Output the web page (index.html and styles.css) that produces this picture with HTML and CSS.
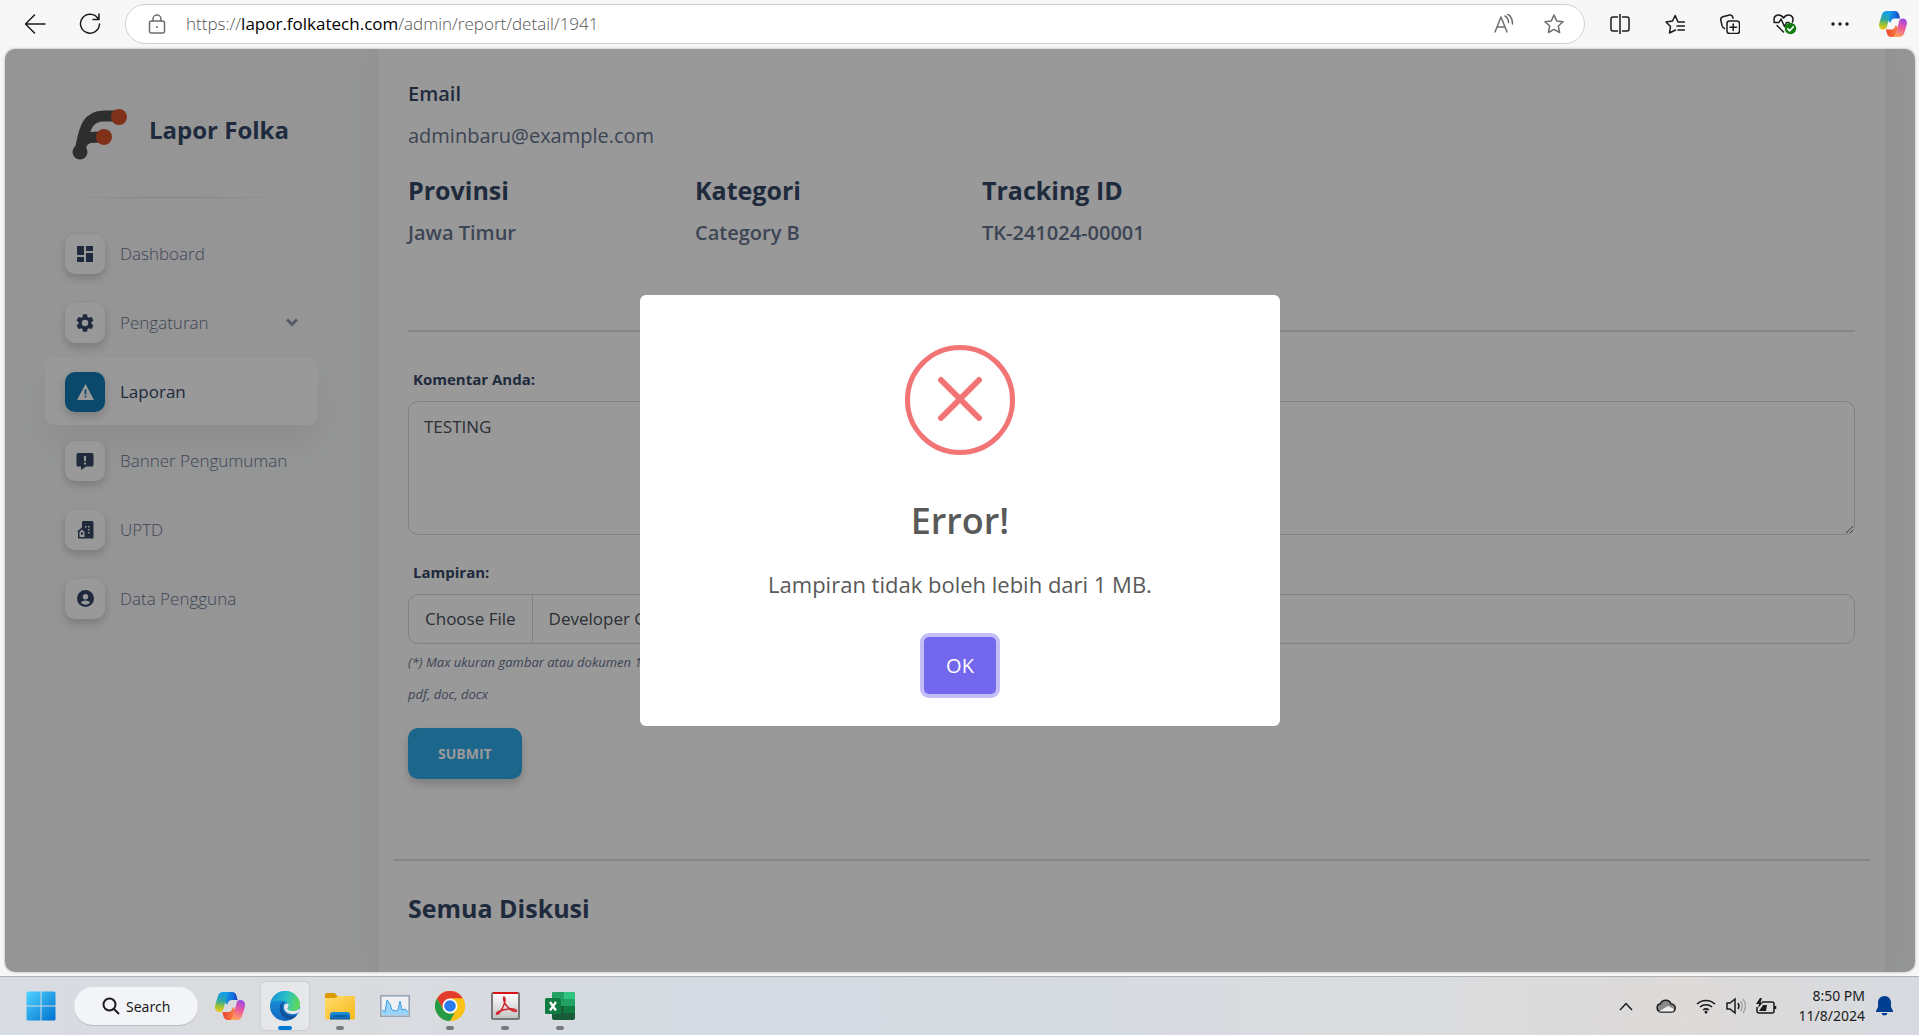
FILE: index.html
```html
<!DOCTYPE html>
<html lang="id">
<head>
<meta charset="utf-8">
<title>Lapor Folka</title>
<link rel="stylesheet" href="styles.css">
</head>
<body>
<svg class="defs" width="0" height="0" aria-hidden="true">
  <defs>
    <linearGradient id="cpTop" x1="0" y1="0" x2="1" y2="0"><stop offset="0" stop-color="#1ba0e8"/><stop offset=".6" stop-color="#1177e0"/><stop offset="1" stop-color="#1b3fb8"/></linearGradient>
    <linearGradient id="cpLeft" x1=".4" y1="0" x2=".3" y2="1"><stop offset="0" stop-color="#129cf0"/><stop offset=".45" stop-color="#2fa9a0"/><stop offset=".75" stop-color="#a5c52d"/><stop offset="1" stop-color="#f4c51c"/></linearGradient>
    <linearGradient id="cpRight" x1=".7" y1="0" x2=".4" y2="1"><stop offset="0" stop-color="#9a48e8"/><stop offset=".5" stop-color="#ee5a9a"/><stop offset="1" stop-color="#ffa65c"/></linearGradient>
    <linearGradient id="cpBottom" x1="0" y1="0" x2="1" y2="0"><stop offset="0" stop-color="#e8452f"/><stop offset="1" stop-color="#fd8a4a"/></linearGradient>
    <linearGradient id="win" x1="0" y1="0" x2="1" y2="1"><stop offset="0" stop-color="#4fd3ff"/><stop offset="1" stop-color="#0070cf"/></linearGradient>
    <linearGradient id="edgeTop" x1="0" y1=".4" x2="1" y2=".6"><stop offset="0" stop-color="#1795d8"/><stop offset=".5" stop-color="#2bc0c6"/><stop offset="1" stop-color="#62dc4e"/></linearGradient>
    <linearGradient id="edgeLeft" x1="0" y1="0" x2="0" y2="1"><stop offset="0" stop-color="#1b9de2"/><stop offset="1" stop-color="#1266bd"/></linearGradient>
    <linearGradient id="folder" x1="0" y1="0" x2="1" y2="1"><stop offset="0" stop-color="#ffdc6e"/><stop offset="1" stop-color="#f8b81a"/></linearGradient>
    <linearGradient id="folderTab" x1="0" y1="0" x2="0" y2="1"><stop offset="0" stop-color="#1a94e0"/><stop offset="1" stop-color="#0a62b0"/></linearGradient>
    <linearGradient id="pdf" x1="0" y1="0" x2="0" y2="1"><stop offset="0" stop-color="#fff"/><stop offset="1" stop-color="#c4c4c4"/></linearGradient>
    <symbol id="copilot" viewBox="0 0 30 28">
      <path fill="url(#cpTop)" d="M8 0h9c3 0 4 2 4.600 4l1 4H17c-3 0-4 2-5 5L9 9z"/>
      <path fill="url(#cpBottom)" d="M22 28h-9c-3 0-4-2-4.600-4l-1-4H13c3 0 4-2 5-5l3 4z"/>
      <path fill="url(#cpLeft)" d="M8.500 0H15c-2 1-2.800 3-3.400 5L8.400 17c-.5 2-1.600 3-3.400 3-4.300 0-6-3-4.500-8L3 4c.8-2.600 2.400-4 5.500-4z"/>
      <path fill="url(#cpRight)" d="M21.500 28H15c2-1 2.800-3 3.400-5l3.200-12c.5-2 1.600-3 3.400-3 4.300 0 6 3 4.500 8L27 24c-.8 2.600-2.400 4-5.500 4z"/>
    </symbol>
  </defs>
</svg>

<header class="toolbar">
  <button class="tool" aria-label="Kembali"><svg width="22" height="22" viewBox="0 0 22 22"><path d="M21 11H1.500M10.500 2l-9 9 9 9"/></svg></button>
  <button class="tool tool-reload" aria-label="Muat ulang"><svg width="22" height="22" viewBox="0 0 22 22"><path d="M19 5.500A9.500 9.500 0 1 0 20.500 11M20 1v5.500h-6"/></svg></button>
  <div class="address">
    <svg width="18" height="20" viewBox="0 0 18 20"><rect x="1.500" y="7" width="15" height="12" rx="2"/><path d="M5 7V5a4 4 0 0 1 8 0v2"/><circle cx="9" cy="13" r="1" class="solid"/></svg>
    <p class="url">https://<b>lapor.folkatech.com</b>/admin/report/detail/1941</p>
    <button class="tool tool-gray" aria-label="Baca nyaring"><svg width="20" height="20" viewBox="0 0 20 20"><path d="M1 18L7 3l6 15M3 13h8M11 2c2.500 1.500 3.500 3.500 3.500 6.500M13.500 0c3.500 2 5 5 5 10"/></svg></button>
    <button class="tool tool-gray" aria-label="Tambah ke favorit"><svg width="20" height="20" viewBox="0 0 20 20"><path d="M10 1l2.700 5.900 6.300.8-4.700 4.300 1.300 6.500L10 15.300l-5.600 3.200L5.700 12 1 7.700l6.300-.8z"/></svg></button>
  </div>
  <nav class="tools" aria-label="Peramban">
    <button class="tool" aria-label="Layar terpisah"><svg width="20" height="20" viewBox="0 0 20 20"><path d="M10 0v20M7.500 3H3a2 2 0 0 0-2 2v10a2 2 0 0 0 2 2h4.500M12.500 3H17a2 2 0 0 1 2 2v10a2 2 0 0 1-2 2h-4.500"/></svg></button>
    <button class="tool" aria-label="Favorit"><svg width="20" height="20" viewBox="0 0 20 20"><path d="M19.500 8H13l-2.800-6.500L7.500 7 1 8l4.500 4.500-1 6.500 6-3M12 12h7.500M13 16h6.500"/></svg></button>
    <button class="tool" aria-label="Koleksi"><svg width="20" height="20" viewBox="0 0 20 20"><rect x="7" y="7" width="12.500" height="12.500" rx="2.500"/><path d="M13.200 10v6.500M10 13.200h6.500M4.500 14.500C3 14 2.500 13 2 11.500L.8 6C.5 4.500 1 3.300 2.800 2.800L9.500 1c1.700-.4 2.800.4 3.200 2l.3 1.200"/></svg></button>
    <button class="tool" aria-label="Performa"><svg width="24" height="22" viewBox="0 0 24 22"><path d="M1.500 9C0 5 2 2 5.500 2 8 2 9.500 3.500 10.500 5c1-1.500 2.500-3 5-3C19 2 21 5 19.500 9M1 9.500h5l2-3.500 3.500 7.500 2-4H16M4 12.500l6.500 6.500"/><circle cx="17.500" cy="15.500" r="5.700" fill="#107c10" stroke="none"/><path d="M14.800 15.800l2 2 3.500-4" stroke="#fff" stroke-width="1.700"/></svg></button>
    <button class="tool" aria-label="Lainnya"><svg width="18" height="20" viewBox="0 0 18 20"><g class="dots"><circle cx="2" cy="10" r="1.700"/><circle cx="9" cy="10" r="1.700"/><circle cx="16" cy="10" r="1.700"/></g></svg></button>
    <button class="tool tool-copilot" aria-label="Copilot"><svg class="flat" width="28" height="26"><use href="#copilot"/></svg></button>
  </nav>
</header>

<div class="viewport">
  <aside class="sidebar">
    <a class="brand" href="#">
      <svg width="55" height="51" viewBox="0 0 55 51"><path d="M8 42C12 24 13 7 32 7h12M10 34c4-6 10-6 20-6" fill="none" stroke="#4d4d4d" stroke-width="11"/><circle cx="8" cy="43" r="7.500" fill="#4d4d4d"/><circle cx="47" cy="8" r="8" fill="#d4542a"/><circle cx="32" cy="28" r="8" fill="#d4542a"/></svg>
      <span>Lapor Folka</span>
    </a>
    <div class="brand-line"></div>
    <nav class="menu">
      <a class="item" href="#"><span class="tile"><svg width="16" height="16" viewBox="0 0 16 16"><path d="M0 0h7v9H0zM9 0h7v5H9zM0 11h7v5H0zM9 7h7v9H9z"/></svg></span>Dashboard</a>
      <a class="item" href="#"><span class="tile"><svg width="18" height="18" viewBox="2 2 20 20"><path d="M19.140 12.940c.04-.3.060-.61.060-.94s-.02-.64-.07-.94l2.030-1.580a.49.49 0 0 0 .12-.61l-1.920-3.320a.49.49 0 0 0-.59-.22l-2.390.96a7 7 0 0 0-1.620-.94l-.36-2.540A.48.48 0 0 0 13.920 2.400h-3.840a.48.48 0 0 0-.47.41l-.36 2.540c-.59.24-1.130.57-1.620.94l-2.390-.96a.48.48 0 0 0-.59.22L2.740 8.870a.48.48 0 0 0 .12.610l2.030 1.580a7 7 0 0 0 0 1.880l-2.030 1.580a.49.49 0 0 0-.12.610l1.920 3.320c.12.220.37.290.59.220l2.390-.96c.5.380 1.030.7 1.620.94l.36 2.540c.05.240.24.410.48.410h3.840c.24 0 .44-.17.470-.41l.36-2.540a7 7 0 0 0 1.620-.94l2.390.96c.22.080.47 0 .59-.22l1.920-3.320a.48.48 0 0 0-.12-.61zM12 15.600a3.600 3.600 0 1 1 0-7.200 3.600 3.600 0 0 1 0 7.200z"/></svg></span>Pengaturan<svg class="caret" width="12" height="9" viewBox="0 0 12 9"><path d="M1 1.500l5 5 5-5"/></svg></a>
      <a class="item active" href="#"><span class="tile"><svg width="17" height="16" viewBox="0 0 17 16"><path fill-rule="evenodd" d="M8.500 0L17 16H0zM7.600 5.500v5h1.800v-5zm0 6.300v1.800h1.800v-1.800z"/></svg></span>Laporan</a>
      <a class="item" href="#"><span class="tile"><svg width="18" height="18" viewBox="0 0 18 18"><path fill-rule="evenodd" d="M2 1h14q1.500 0 1.500 1.500V13q0 1.500-1.500 1.500h-6L5 18v-3.500H2Q.5 14.500.5 13V2.500Q.5 1 2 1zm6 3v5h2V4zm0 6.500v2h2v-2z"/></svg></span>Banner Pengumuman</a>
      <a class="item" href="#"><span class="tile"><svg width="17" height="18" viewBox="0 0 17 18"><path fill-rule="evenodd" d="M6 0h9q1.500 0 1.500 1.500V17q0 .5-.5.500H1v-7H0L5 6.500V1.500Q5 0 6 0zm2 5v1.500h1.500V5zm3 0v1.500h1.500V5zm0 3v1.500h1.500V8zm0 3v1.500h1.500V11zM2.500 11v5h5v-5L5 8.500z"/><circle cx="5" cy="12.500" r="1.200"/></svg></span>UPTD</a>
      <a class="item" href="#"><span class="tile"><svg width="17" height="17" viewBox="0 0 17 17"><path fill-rule="evenodd" d="M8.500 0a8.500 8.500 0 1 0 0 17 8.500 8.500 0 0 0 0-17zm0 4a2.700 2.700 0 1 1 0 5.400 2.700 2.700 0 0 1 0-5.400zm0 6.600c2.300 0 4.200 1 4.500 2.100-2.500 2.600-6.500 2.600-9 0 .3-1.100 2.200-2.100 4.500-2.100z"/></svg></span>Data Pengguna</a>
    </nav>
  </aside>

  <main class="card">
    <section class="report">
      <h6 class="field">Email</h6>
      <p class="value">adminbaru@example.com</p>
      <div class="facts">
        <div><h5 class="heading">Provinsi</h5><p class="fact">Jawa Timur</p></div>
        <div><h5 class="heading">Kategori</h5><p class="fact">Category B</p></div>
        <div><h5 class="heading">Tracking ID</h5><p class="fact">TK-241024-00001</p></div>
      </div>
      <hr class="rule">
      <form class="form">
        <label class="label" for="komentar">Komentar Anda:</label>
        <textarea class="comment" id="komentar">TESTING</textarea>
        <label class="label" for="lampiran">Lampiran:</label>
        <div class="file">
          <input class="file-input" type="file" id="lampiran">
          <label class="file-button" for="lampiran">Choose File</label>
          <span class="file-name">Developer Guide.pdf</span>
        </div>
        <p class="hint">(*) Max ukuran gambar atau dokumen 1 MB, jpg, png,<br>pdf, doc, docx</p>
        <button class="submit" type="button">SUBMIT</button>
      </form>
    </section>
    <hr class="rule">
    <section class="discussion"><h5 class="heading">Semua Diskusi</h5></section>
  </main>

  <div class="backdrop">
    <div class="modal" role="dialog" aria-labelledby="modal-title">
      <svg width="110" height="110" viewBox="0 0 110 110"><circle cx="55" cy="55" r="52.500"/><path d="M36 35l38 38M74 35L36 73"/></svg>
      <h2 id="modal-title">Error!</h2>
      <p>Lampiran tidak boleh lebih dari 1 MB.</p>
      <button type="button">OK</button>
    </div>
  </div>
</div>

<footer class="taskbar">
  <button class="start" aria-label="Start"><svg width="30" height="30" viewBox="0 0 30 30"><path fill="url(#win)" d="M2 .5h12.500v14H.5V2Q.5.500 2 .5zM15.500.500H28q1.500 0 1.500 1.500v12.500h-14zM.5 15.500h14v14H2q-1.500 0-1.500-1.500zM15.500 15.500h14V28q0 1.500-1.500 1.500H15.500z"/></svg></button>
  <button class="search"><svg width="18" height="18" viewBox="0 0 18 18"><circle cx="7.500" cy="7.500" r="6"/><path d="M12 12l5 5"/></svg>Search</button>
  <nav class="apps" aria-label="Aplikasi">
    <button class="app" aria-label="Copilot"><svg width="30" height="28"><use href="#copilot"/></svg></button>
    <button class="app current" aria-label="Edge"><svg width="30" height="30" viewBox="0 0 30 30"><circle cx="15" cy="15" r="15" fill="url(#edgeLeft)"/><path fill="url(#edgeTop)" d="M.6 12C2 5 8 0 15 0c8.500 0 15 6 15 13.500 0 4-3 6.500-7 6.500-3.500 0-5.500-1-5.500-2.200 0-.8 1-1.300 1-3.300 0-3-3-5-7-5-4.500 0-8 1-10.900 2.500z"/><path fill="#12509a" d="M12.500 11C8 15 9 23 15 27c4 2.600 8 1.500 12-3-5 2-13 .500-14.500-6.500-.4-2 0-4 1.500-6z"/><path fill="#e6e7e9" d="M28 22c-5 2.500-13 1-14-5-.5-3 1-4.500 3-4.500 1.500 0 2 1 1.500 2.500s-1 2-1 2.800c0 1.200 2 2.200 5.500 2.200 3 0 5-1 6.500-3 0 2-.5 4-1.500 5z"/></svg></button>
    <button class="app open" aria-label="File Explorer"><svg width="30" height="28" viewBox="0 0 30 28"><path fill="#d99a06" d="M0 3q0-2 2-2h7.500l3 3H29v5H0z"/><path fill="url(#folder)" d="M0 6h10l3-2h16q1 0 1 1v21q0 1.500-1.500 1.500h-27Q0 27.500 0 26z"/><path fill="url(#folderTab)" d="M5 27.500V23q0-3 3-3h14q3 0 3 3v4.500z"/><path d="M8.500 24h13" stroke="#06437e"/></svg></button>
    <button class="app" aria-label="Task Manager"><svg width="30" height="22" viewBox="0 0 30 22"><rect x=".8" y=".8" width="28.400" height="20.400" fill="#eef0f3" stroke="#98a5b4" stroke-width="1.600"/><path fill="#9bd4fa" d="M2 20v-5l3 2 2-12 3 4 2 6 4 1 2-1 2-9 2 9 3-1 3 3v3z"/><path fill="none" stroke="#3b9fe6" d="M2 15l3 2L7 5l3 4 2 6 4 1 2-1 2-9 2 9 3-1 3 3"/></svg></button>
    <button class="app open" aria-label="Chrome"><svg width="30" height="30" viewBox="0 0 30 30"><circle cx="15" cy="15" r="15" fill="#fbc116"/><path fill="#e33b2e" d="M2 7.500a15 15 0 0 1 26 0H15L8.500 18.700z"/><path fill="#259a47" d="M2 7.500l6.500 11.300A7.500 7.500 0 0 0 15 22.500h6.500L15 30A15 15 0 0 1 2 7.500z"/><path fill="#fbc116" d="M21.500 18.700L15 30A15 15 0 0 0 28 7.500H15z"/><circle cx="15" cy="15" r="7.500" fill="#fff"/><circle cx="15" cy="15" r="5.800" fill="#2a7bee"/></svg></button>
    <button class="app open" aria-label="Acrobat"><svg width="29" height="28" viewBox="0 0 29 28"><rect width="29" height="28" rx="2" fill="#777"/><rect x="2" y="1" width="25" height="25" fill="url(#pdf)"/><path fill="#d8141b" d="M2 0h25v2H2z"/><path fill="none" stroke="#cf242c" stroke-width="1.500" d="M13 5c3 2 0 8-2 12-3 5-5 6-5.500 5-.7-2 6-4.500 12-5 5-.5 8 .500 8 1.800-1 1.700-6-.3-9.500-4.500C13 11 12 6.500 13 5z"/></svg></button>
    <button class="app open" aria-label="Excel"><svg width="30" height="28" viewBox="0 0 30 28"><rect x="7" width="23" height="28" rx="2" fill="#185c37"/><path fill="#21a366" d="M9 0h9.500v14H7V2q0-2 2-2z"/><path fill="#33c481" d="M18.500 0H28q2 0 2 2v5H18.500z"/><path fill="#21a366" d="M18.500 7H30v7H18.500z"/><path fill="#107c41" d="M18.500 14H30v7H18.500z"/><rect y="6" width="16" height="16" rx="1.500" fill="#107c41"/><path stroke="#fff" stroke-width="2.200" d="M5 10l6 8.500M11 10l-6 8.500"/></svg></button>
  </nav>
  <div class="tray">
    <button aria-label="Ikon tersembunyi"><svg width="14" height="9" viewBox="0 0 14 9"><path d="M1 8l6-6.500L13 8"/></svg></button>
    <button aria-label="OneDrive"><svg width="20" height="14" viewBox="0 0 20 14"><path fill="#8a8a8a" d="M5 13a4.200 4.200 0 0 1-.5-8.300A5.700 5.700 0 0 1 15 5a4 4 0 0 1 .5 8z"/><path fill="#eee" stroke="none" d="M3 12.500L12 7l6 3-1 2.500z"/></svg></button>
    <button aria-label="Wi-Fi"><svg width="20" height="16" viewBox="0 0 20 16"><path d="M1 6a13 13 0 0 1 18 0M4 9a9 9 0 0 1 12 0M7 12a5 5 0 0 1 6 0"/><circle cx="10" cy="14" r="1.500" class="solid"/></svg></button>
    <button aria-label="Volume"><svg width="20" height="18" viewBox="0 0 20 18"><path d="M1 6h3l5-4v14l-5-4H1zM12 6q2 3 0 6"/><path class="faint" d="M14.500 4q3.500 5 0 10M17 2q5 7 0 14"/></svg></button>
    <button aria-label="Baterai"><svg width="21" height="16" viewBox="0 0 21 16"><path d="M6 4h10q2 0 2 2v7q0 2-2 2H3q-2 0-2-2V9M19.500 8v3"/><path class="solid" d="M3 13l4-6h4l-1 6zM4 0L0 6h3L2 10l5-5.500H4.500L6 0z"/></svg></button>
  </div>
  <p class="clock">8:50 PM<br>11/8/2024</p>
  <button class="bell" aria-label="Notifikasi"><svg width="17" height="20" viewBox="0 0 17 20"><path d="M8.500 0c4 0 6.500 3 6.500 6.500V11l2 4v1H0v-1l2-4V6.500C2 3 4.500 0 8.500 0zM5.500 17h6q-.5 2.500-3 2.500t-3-2.500z"/></svg></button>
</footer>
</body>
</html>
```
FILE: styles.css
```css
* { box-sizing: border-box; }

body {
  margin: 0;
  height: 100vh;
  display: flex;
  flex-direction: column;
  overflow: hidden;
  background: #f7f7f7;
  color: #344767;
  font-family: "Open Sans", "Noto Sans", sans-serif;
}

h2, h5, h6, p { margin: 0; }

button {
  padding: 0;
  border: 0;
  background: none;
  font-family: inherit;
  color: inherit;
}

svg { flex: none; }

.defs { position: absolute; }

/* Browser toolbar */
.toolbar {
  flex: none;
  display: flex;
  align-items: center;
  height: 49px;
  padding: 0 0 2px 7px;
}

.tool {
  display: grid;
  place-items: center;
  width: 55px;
  height: 36px;
}

.tool svg,
.address > svg {
  fill: none;
  stroke: #1b1b1b;
  stroke-width: 1.5;
  stroke-linecap: round;
  stroke-linejoin: round;
}

.tool .flat { stroke: none; }
.tool .dots { fill: #1b1b1b; stroke: none; }
.tool-copilot { width: 52px; }
.tool-gray { width: 50px; }
.tool-gray svg, .address > svg { stroke: #6e6e6e; }
.address .solid { fill: #6e6e6e; stroke: none; }

.address {
  flex: 1;
  display: flex;
  align-items: center;
  height: 40px;
  margin-left: 8px;
  padding: 0 5px 0 22px;
  border: 1px solid #d0d0d0;
  border-radius: 20px;
  background: #fff;
}

.url {
  flex: 1;
  margin-left: 20px;
  font-size: 17px;
  line-height: 24px;
  font-weight: 300;
  color: #555;
}

.url b { font-weight: 400; color: #000; }

.tools { display: flex; margin-left: 7px; }

/* Page area */
.viewport {
  position: relative;
  flex: 1;
  display: flex;
  min-height: 0;
  margin: 0 4px 4px 5px;
  border-radius: 10px;
  overflow: hidden;
  background: #f8f9fa;
  box-shadow: 0 0 3px rgba(0, 0, 0, .3);
}

.sidebar { flex: none; width: 373px; padding: 60px 60px 0 40px; }

.brand {
  display: flex;
  align-items: flex-start;
  gap: 22px;
  padding-left: 27px;
  font-size: 24px;
  line-height: 42px;
  font-weight: 700;
  color: #344767;
  text-decoration: none;
}

.brand-line {
  height: 1px;
  margin: 37px 24px 22px 10px;
  background: linear-gradient(90deg, transparent, #d8dade, transparent);
}

.menu { display: grid; grid-auto-rows: 67px; gap: 2px; }

.item {
  display: flex;
  align-items: center;
  gap: 15px;
  padding: 0 20px;
  border-radius: 10px;
  font-size: 17px;
  font-weight: 300;
  color: #67748e;
  text-decoration: none;
}

.tile {
  display: grid;
  place-items: center;
  width: 40px;
  height: 40px;
  border-radius: 10px;
  background: #fff;
  box-shadow: 0 5px 8px rgba(20, 20, 20, .14), 0 2px 10px rgba(20, 20, 20, .06);
}

.tile svg { fill: #344767; }

.active {
  background: #fff;
  box-shadow: 0 20px 34px rgba(0, 0, 0, .06);
  color: #344767;
  font-weight: 500;
}

.active .tile { background: #137bb5; }
.active .tile svg { fill: #fff; }

.caret { margin-left: auto; fill: none; stroke: #8e95ad; stroke-width: 3; }

.card {
  flex: 1;
  margin-right: 30px;
  background: #fff;
  box-shadow: 0 0 34px rgba(0, 0, 0, .06);
}

.report { padding: 30px 30px 80px; }

.field { font-size: 20px; line-height: 30px; font-weight: 600; }

.value { margin-top: 12px; font-size: 20px; line-height: 30px; color: #67748e; }

.facts {
  display: grid;
  grid-template-columns: repeat(3, 287px);
  margin: 22px 0 82px;
}

.heading { font-size: 25px; line-height: 34px; font-weight: 700; }

.fact { margin-top: 11px; font-size: 20px; line-height: 30px; font-weight: 600; color: #67748e; }

.rule { height: 2px; margin: 0; border: 0; background: #dde1e5; }

.card > .rule { margin: 0 15px; }

.form { display: flex; flex-direction: column; align-items: flex-start; padding-top: 36px; }

.label { margin: 0 5px 11px; font-size: 15px; line-height: 22px; font-weight: 700; }

.comment {
  width: 100%;
  height: 134px;
  margin-bottom: 26px;
  padding: 10px 15px;
  border: 1px solid #d2d6da;
  border-radius: 10px;
  background: #fff;
  font-family: inherit;
  font-size: 17px;
  line-height: 30px;
  color: #495057;
}

.file {
  display: flex;
  width: 100%;
  height: 50px;
  border: 1px solid #d2d6da;
  border-radius: 10px;
  font-size: 17px;
  line-height: 48px;
  color: #495057;
}

.file-input { position: absolute; width: 1px; height: 1px; opacity: 0; }
.file-button { padding: 0 16px; border-right: 1px solid #d2d6da; }
.file-name { padding-left: 16px; }

.hint { margin-top: 2px; font-size: 13px; line-height: 32px; font-style: italic; font-weight: 400; color: #67748e; }

.submit {
  margin-top: 18px;
  padding: 0 30px;
  border-radius: 10px;
  background: #2fa9e8;
  box-shadow: 0 5px 9px rgba(0, 0, 0, .18);
  font-size: 14px;
  line-height: 51px;
  font-weight: 700;
  color: #fff;
}

.discussion { padding: 30px; }

/* Dialog */
.backdrop {
  position: absolute;
  inset: 0;
  display: grid;
  place-items: center;
  padding-bottom: 1px;
  background: rgba(0, 0, 0, .4);
}

.modal {
  display: flex;
  flex-direction: column;
  align-items: center;
  width: 640px;
  padding: 50px 20px 32px;
  border-radius: 6px;
  background: #fff;
  color: #595959;
}

.modal svg { fill: none; stroke: #f27474; stroke-width: 5; }
.modal svg path { stroke-width: 6; stroke-linecap: round; }
.modal h2 { margin-top: 40px; font-size: 36px; line-height: 52px; font-weight: 600; }
.modal p { margin-top: 20px; font-size: 22px; line-height: 34px; }

.modal button {
  margin-top: 36px;
  padding: 0 22px;
  border-radius: 5px;
  background: #7367ee;
  box-shadow: 0 0 0 4px #c3bdf8;
  font-size: 20px;
  line-height: 57px;
  font-weight: 500;
  color: #fff;
}

/* Taskbar */
.taskbar {
  flex: none;
  display: flex;
  align-items: center;
  height: 59px;
  padding: 0 26px;
  border-top: 1px solid #adb0b4;
  background: linear-gradient(90deg, #d7dbe3, #dadbde 15%, #d3dbe3 40%, #d9dcdf 70%, #dddad8 88%, #d6dae0);
  font-family: "Noto Sans", sans-serif;
  font-size: 15px;
  color: #1b1b1b;
}

.taskbar svg { display: block; }

.search {
  display: flex;
  align-items: center;
  gap: 6px;
  height: 38px;
  margin: 0 8px 0 18px;
  padding: 0 28px;
  border-radius: 19px;
  background: #f3f4f7;
  box-shadow: 0 1px 1px rgba(0, 0, 0, .15);
  font-size: 14px;
}

.search svg { fill: none; stroke: #1b1b1b; stroke-width: 2; }

.apps { display: flex; gap: 7px; }

.app {
  position: relative;
  display: grid;
  place-items: center;
  width: 48px;
  height: 48px;
  border-radius: 5px;
}

.current { background: #e6e7e9; box-shadow: 0 0 1px 1px rgba(0, 0, 0, .06); }

.open::after,
.current::after {
  content: "";
  position: absolute;
  bottom: 0;
  left: 20px;
  width: 8px;
  height: 4px;
  border-radius: 2px;
  background: #767a7e;
}

.current::after { left: 17px; width: 14px; background: #0078d4; }

.tray { display: flex; align-items: center; gap: 10px; margin-left: auto; }
.tray svg { fill: none; stroke: #1b1b1b; stroke-width: 1.5; }
.tray button:nth-child(1) { margin-right: 13px; }
.tray button:nth-child(2) { margin-right: 10px; }
.tray .solid { fill: #1b1b1b; stroke: none; }
.tray .faint { stroke: #a5a6a8; }

.clock { margin-left: 22px; font-size: 14px; line-height: 20px; text-align: right; }

.bell { margin-left: 11px; }
.bell svg { fill: #003e92; }
```
